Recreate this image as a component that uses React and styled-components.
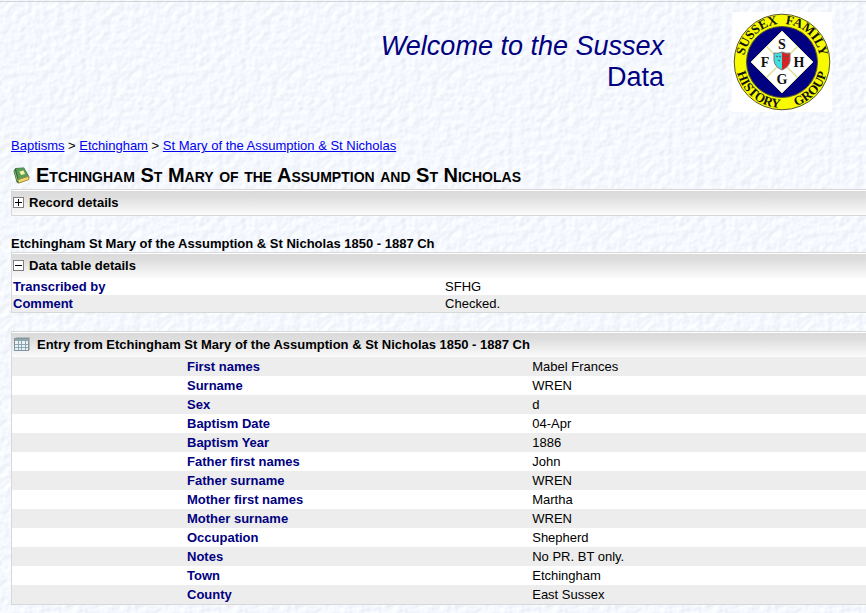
import React, { useState } from "react";
import styled, { createGlobalStyle } from "styled-components";

const paper = `<svg xmlns="http://www.w3.org/2000/svg" width="160" height="160"><filter id="p" x="0" y="0" width="100%" height="100%" color-interpolation-filters="sRGB"><feTurbulence type="fractalNoise" baseFrequency="0.13" numOctaves="2" seed="4" stitchTiles="stitch"/><feDiffuseLighting lighting-color="#f6f9ff" surfaceScale="0.26" diffuseConstant="1.2"><feDistantLight azimuth="225" elevation="56"/></feDiffuseLighting></filter><rect width="160" height="160" filter="url(#p)"/></svg>`;

const GlobalStyle = createGlobalStyle`
  * { box-sizing: border-box; }
  body {
    margin: 0;
    color: #000;
    font: 13px/17px "Liberation Sans", Arial, sans-serif;
    background: #f5f8fe url("data:image/svg+xml,${encodeURIComponent(paper)}");
  }
`;

const Page = styled.div`
  padding: 1px 0 8px 11px;
  overflow: hidden;
`;

const Header = styled.header`
  display: flex;
  justify-content: flex-end;
  gap: 68px;
  margin-left: -11px;
  padding: 10px 34px 0 0;
  border-top: 1px solid #d4d4d4;
`;

const Welcome = styled.h1`
  margin: 0;
  padding-top: 19px;
  color: #000080;
  font-size: 27px;
  font-weight: 400;
  line-height: 31px;
  text-align: right;
  span { display: block; }
`;

const Logo = styled.svg`
  display: block;
  width: 100px;
  height: 100px;
`;

const Trail = styled.nav`
  margin-top: 25px;
  white-space: nowrap;
`;

const TrailLink = styled.a`
  color: #0000ee;
  text-decoration: underline;
`;

const Title = styled.h2`
  display: flex;
  align-items: center;
  gap: 6px;
  margin: 10px 0 3px;
  padding-left: 2px;
  font-size: 20px;
  font-variant: small-caps;
  line-height: 22px;
  white-space: nowrap;
`;

const Icon = styled.svg`
  display: block;
  flex: none;
  width: 17px;
  height: 17px;
`;

const Panel = styled.section`
  margin-bottom: 18px;
  border: 1px solid #d8d8d8;
  border-right: 0;
  background: #fff;
`;

const Bar = styled.h3`
  display: flex;
  align-items: center;
  gap: ${(p) => (p.$icon ? "6px" : "5px")};
  height: 25px;
  margin: 0;
  padding: 0 0 2px ${(p) => (p.$icon ? "2px" : "1px")};
  border-top: 1px solid #fff;
  background: linear-gradient(#dadada, #dedede 25%, #fbfbfb);
  font-size: 13px;
  white-space: nowrap;
`;

const Toggle = styled.button`
  display: flex;
  align-items: center;
  gap: 5px;
  padding: 0;
  border: 0;
  background: none;
  color: inherit;
  font: inherit;
  cursor: pointer;
`;

const Box = styled.svg`
  display: block;
  width: 11px;
  height: 11px;
`;

const Caption = styled.h3`
  margin: 0;
  font-size: 13px;
  line-height: 17px;
`;

const Group = styled.div`
  margin-top: 19px;
`;

const Table = styled.table`
  width: 100%;
  border-collapse: collapse;
  table-layout: fixed;
`;

const Row = styled.tr`
  height: ${(p) => (p.$roomy ? "19px" : "17px")};
  background: ${(p) => (p.$shaded ? "#ededed" : "#fff")};
`;

const Label = styled.th`
  width: ${(p) => (p.$inset ? "60.8%" : "50.6%")};
  padding: 0 0 0 ${(p) => (p.$inset ? "175px" : "1px")};
  color: #000080;
  font-weight: 700;
  text-align: left;
`;

const Value = styled.td`
  padding: 0 0 0 1px;
`;

const details = [
  ["Transcribed by", "SFHG"],
  ["Comment", "Checked."],
];

const entry = [
  ["First names", "Mabel Frances"],
  ["Surname", "WREN"],
  ["Sex", "d"],
  ["Baptism Date", "04-Apr"],
  ["Baptism Year", "1886"],
  ["Father first names", "John"],
  ["Father surname", "WREN"],
  ["Mother first names", "Martha"],
  ["Mother surname", "WREN"],
  ["Occupation", "Shepherd"],
  ["Notes", "No PR. BT only."],
  ["Town", "Etchingham"],
  ["County", "East Sussex"],
];

function Records({ rows, entryRows }) {
  return (
    <Table>
      <tbody>
        {rows.map(([label, value], i) => (
          <Row key={label} $roomy={entryRows} $shaded={i % 2 === (entryRows ? 0 : 1)}>
            <Label scope="row" $inset={entryRows}>{label}</Label>
            <Value>{value}</Value>
          </Row>
        ))}
      </tbody>
    </Table>
  );
}

function Expander({ open, onClick, children }) {
  return (
    <Toggle type="button" aria-expanded={open} onClick={onClick}>
      <Box viewBox="0 0 11 11" aria-hidden="true" shapeRendering="crispEdges">
        <rect x=".5" y=".5" width="10" height="10" fill="#fff" stroke="#808080" />
        <path d={open ? "M2 5.5h7" : "M2 5.5h7M5.5 2v7"} stroke="#000" />
      </Box>
      {children}
    </Toggle>
  );
}

function SocietyLogo() {
  return (
    <Logo viewBox="0 0 100 100" role="img" aria-label="Sussex Family History Group">
      <defs>
        <path id="upper" d="M12 50a38 38 0 0 1 76 0" />
        <path id="lower" d="M4 50a46 46 0 0 0 92 0" />
      </defs>
      <rect width="100" height="100" fill="#fff" />
      <circle cx="50" cy="50" r="47.8" fill="#f8fb00" stroke="#555530" />
      <circle cx="50" cy="50" r="35.5" fill="#000080" stroke="#555530" />
      <path d="M50 19 81 50 50 81 19 50Z" fill="#fff" stroke="#dede90" />
      <path d="m34.5 34.5 31 31m0-31-31 31" stroke="#dede90" strokeWidth="1.4" />
      <path d="M42 41q4 1 8-1v18q-7-3-8-9Z" fill="#40e0e0" />
      <path d="M50 40q4 2 8 1v8q-1 6-8 9Z" fill="#e02020" />
      <path d="M42 41q4 1 8-1 4 2 8 1v8q-1 6-8 9-7-3-8-9Z" fill="none" stroke="#777" />
      <path d="m44 44 2 1m1-1 2 1m-3 3 2 1m3-5 2 1m1-1 2 1m-4 3 2 1m-4 3 2 1" stroke="#52545c" />
      <g fontFamily="Liberation Serif, Times New Roman, serif" fontWeight="700" fill="#111" textAnchor="middle">
        <g fontSize="14">
          <text x="50" y="37">S</text>
          <text x="33" y="55">F</text>
          <text x="67" y="55">H</text>
          <text x="50" y="72">G</text>
        </g>
        <g fontSize="13">
          <text><textPath href="#upper" startOffset="26%">SUSSEX</textPath></text>
          <text><textPath href="#upper" startOffset="74%">FAMILY</textPath></text>
          <text><textPath href="#lower" startOffset="28%">HISTORY</textPath></text>
          <text><textPath href="#lower" startOffset="76%">GROUP</textPath></text>
        </g>
      </g>
    </Logo>
  );
}

function BookIcon() {
  return (
    <Icon viewBox="0 0 17 17" aria-hidden="true">
      <path d="M.5 4 2.500 1 11 .500 16.500 10 15.500 13 5.500 16.500 3.500 15Z" fill="#2f6b35" />
      <path d="M3 1.500 11 1 15.500 9.500 5.500 12.500Z" fill="#5c9c57" />
      <path d="m5 12.800 10.500-3.300 .3 3-10 3.500Z" fill="#f4d878" stroke="#b08a28" strokeWidth=".7" />
      <path d="m6.500 4.500 4-1 1.500 3.500-4 1Z" fill="#f6f2a4" />
      <path d="m1.500 3.500 3 10.500" stroke="#8ab779" />
    </Icon>
  );
}

function TableIcon() {
  return (
    <Icon viewBox="0 0 17 17" aria-hidden="true" shapeRendering="crispEdges">
      <path d="M2 1h14v13H2Z" fill="#b4bcbe" />
      <path d="M.5 2.500h14v12H.500Z" fill="#e9f3f6" stroke="#8295a0" />
      <path d="M1 3h13v2H1Z" fill="#91a9a2" />
      <path d="M1 8.500h13M1 11.500h13M4.500 3v11M7.500 3v11M11.500 3v11" stroke="#8ba4b2" />
    </Icon>
  );
}

export default function App() {
  const [recordOpen, setRecordOpen] = useState(false);
  const [tableOpen, setTableOpen] = useState(true);
  return (
    <>
      <GlobalStyle />
      <Page>
        <Header>
          <Welcome><em>Welcome to the Sussex</em><span>Data</span></Welcome>
          <SocietyLogo />
        </Header>
        <Trail aria-label="Breadcrumb">
          <TrailLink href="#baptisms">Baptisms</TrailLink>{" > "}
          <TrailLink href="#etchingham">Etchingham</TrailLink>{" > "}
          <TrailLink href="#church">St Mary of the Assumption &amp; St Nicholas</TrailLink>
        </Trail>
        <Title><BookIcon />Etchingham St Mary of the Assumption and St Nicholas</Title>
        <Panel>
          <Bar><Expander open={recordOpen} onClick={() => setRecordOpen(!recordOpen)}>Record details</Expander></Bar>
        </Panel>
        <Group>
          <Caption>Etchingham St Mary of the Assumption &amp; St Nicholas 1850 - 1887 Ch</Caption>
          <Panel>
            <Bar><Expander open={tableOpen} onClick={() => setTableOpen(!tableOpen)}>Data table details</Expander></Bar>
            {tableOpen && <Records rows={details} />}
          </Panel>
        </Group>
        <Panel>
          <Bar $icon><TableIcon />Entry from Etchingham St Mary of the Assumption &amp; St Nicholas 1850 - 1887 Ch</Bar>
          <Records rows={entry} entryRows />
        </Panel>
      </Page>
    </>
  );
}
